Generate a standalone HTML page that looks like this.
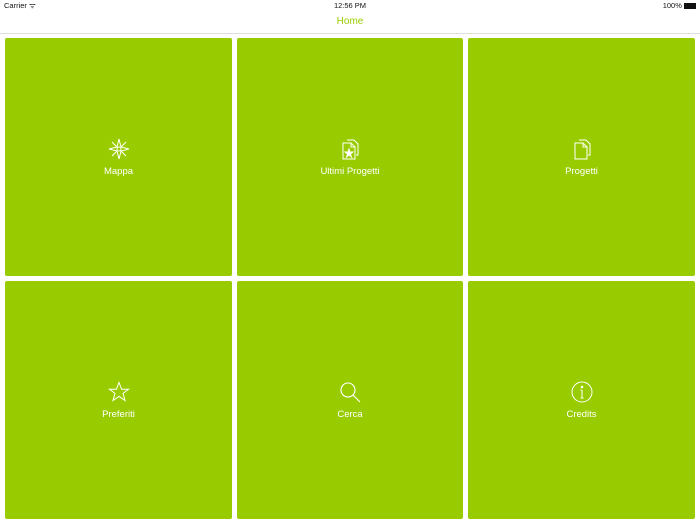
<!DOCTYPE html>
<html><head><meta charset="utf-8"><style>
*{margin:0;padding:0;box-sizing:border-box}
body{width:700px;height:525px;background:#fff;font-family:"Liberation Sans",sans-serif;position:relative;overflow:hidden}
.sb{position:absolute;top:0;height:12px;font-size:7.5px;color:#111;line-height:12px}
.nav{position:absolute;top:16px;left:0;width:700px;text-align:center;color:#99cc00;font-size:10px}
.line{position:absolute;top:33px;left:0;width:700px;height:1px;background:#ddd}
.t{position:absolute;background:#99cc00;border-radius:2px;color:#fff}
.t svg{position:absolute;left:50%;margin-left:-11px;top:100px;width:22px;height:22px}
.t span{position:absolute;left:0;right:0;top:128px;text-align:center;font-size:9.5px}
</style></head><body>
<div class="sb" style="left:4px">Carrier ᯤ</div>
<div class="sb" style="left:0;width:700px;text-align:center">12:56 PM</div>
<div class="sb" style="right:4px">100% <span style="display:inline-block;width:12px;height:6px;background:#111;vertical-align:middle"></span></div>
<div class="nav">Home</div>
<div class="line"></div>

<div class="t" style="left:5px;top:38px;width:227px;height:238px">
<svg viewBox="0 0 22 22" fill="none" stroke="#fff" stroke-width="1"><path d="M11 1L13 9L21 11L13 13L11 21L9 13L1 11L9 9Z"/><path d="M4 4L9 9M18 4L13 9M4 18L9 13M18 18L13 13"/><circle cx="11" cy="11" r="2"/></svg>
<span>Mappa</span></div>
<div class="t" style="left:237px;top:38px;width:226px;height:238px">
<svg viewBox="0 0 22 22" fill="none" stroke="#fff" stroke-width="1"><path d="M8 2H15L19 6V17H17"/><path d="M4 5H12L16 9V21H4Z"/><path d="M12 5V9H16"/><path d="M10 11L11 14H14L11.5 16L12.5 19L10 17L7.5 19L8.5 16L6 14H9Z" fill="#fff"/></svg>
<span>Ultimi Progetti</span></div>
<div class="t" style="left:468px;top:38px;width:227px;height:238px">
<svg viewBox="0 0 22 22" fill="none" stroke="#fff" stroke-width="1"><path d="M8 2H15L19 6V17H17"/><path d="M4 5H12L16 9V21H4Z"/><path d="M12 5V9H16"/></svg>
<span>Progetti</span></div>
<div class="t" style="left:5px;top:281px;width:227px;height:238px">
<svg viewBox="0 0 22 22" fill="none" stroke="#fff" stroke-width="1"><path d="M11 1.5L13.6 8.2H20.6L15 12.4L17 19.5L11 15.3L5 19.5L7 12.4L1.4 8.2H8.4Z"/></svg>
<span>Preferiti</span></div>
<div class="t" style="left:237px;top:281px;width:226px;height:238px">
<svg viewBox="0 0 22 22" fill="none" stroke="#fff" stroke-width="1.1"><circle cx="9" cy="9" r="7"/><path d="M14 14L21 21"/></svg>
<span>Cerca</span></div>
<div class="t" style="left:468px;top:281px;width:227px;height:238px">
<svg viewBox="0 0 22 22" fill="none" stroke="#fff" stroke-width="1"><circle cx="11" cy="11" r="10"/><path d="M11 9V17M9.5 9H11M9.5 17H12.5"/><circle cx="11" cy="6" r="0.8" fill="#fff"/></svg>
<span>Credits</span></div>
</body></html>
